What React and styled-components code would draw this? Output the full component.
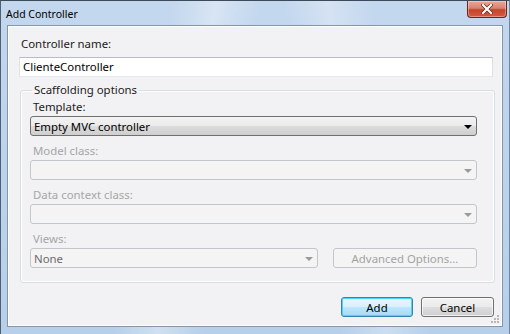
import styled, { createGlobalStyle } from 'styled-components'

const GlobalStyle = createGlobalStyle`
  html, body { margin: 0; padding: 0; }
  body {
    background: #b9d1ea;
    font-family: "Noto Sans", "Open Sans", sans-serif;
    font-size: 11.4px;
  }
`

const Window = styled.div`
  width: 510px;
  height: 334px;
  box-sizing: border-box;
  border-top: 1px solid #3d4a5a;
  border-left: 1px solid #4f6075;
  border-right: 1px solid #6f86a3;
  background:
    linear-gradient(100deg, transparent 30%, rgba(255,255,255,0.35) 38%, transparent 46%),
    linear-gradient(80deg, transparent 60%, rgba(255,255,255,0.3) 68%, transparent 76%),
    linear-gradient(180deg, #c3d7ee 0%, #b7cfe9 100%);
  display: flex;
  flex-direction: column;
`

const TitleBar = styled.div`
  height: 24px;
  display: flex;
  align-items: flex-start;
  justify-content: space-between;
`

const Title = styled.span`
  margin: 6px 0 0 5px;
  font-size: 10.5px;
  color: #000;
`

const CloseButton = styled.div`
  width: 40px;
  height: 17px;
  margin-right: 2px;
  box-sizing: border-box;
  border: 1px solid #6e2318;
  border-top: none;
  border-radius: 0 0 4px 4px;
  background: linear-gradient(180deg, #e8a898 0%, #d8836f 45%, #c7432c 55%, #d25a3f 100%);
  box-shadow: inset 0 0 0 1px rgba(255,255,255,0.35);
  display: flex;
  align-items: center;
  justify-content: center;
`

const Client = styled.div`
  margin: 0 6px 0 6px;
  border: 1px solid #8295ab;
  box-shadow: inset 0 0 0 1px #ffffff;
  background: #f2f1f4;
  padding: 10px 9px 9px 11px;
  display: flex;
  flex-direction: column;
  position: relative;
`

const Label = styled.div`
  line-height: 16px;
  height: 16px;
  color: ${p => (p.disabled ? '#a3a3a3' : '#1a1a1a')};
  padding-left: ${p => p.indent || 0}px;
`

const TextInput = styled.div`
  margin-top: 5px;
  height: 20px;
  box-sizing: border-box;
  border: 1px solid;
  border-color: #b9bcc2 #dbdfe6 #e3e9ef #e2e3ea;
  background: #ffffff;
  padding: 0 3px;
  line-height: 18px;
  color: #000;
`

const Group = styled.fieldset`
  margin: 6px -1px 0 1px;
  padding: 3px 17px 14px 9px;
  border: 1px solid #d5dfe5;
  border-radius: 3px;
  box-shadow: inset 0 0 0 1px #ffffff;
  display: flex;
  flex-direction: column;
`

const Legend = styled.legend`
  padding: 0 2px;
  margin-left: 2px;
  line-height: 14px;
  color: #1a1a1a;
`

const Field = styled.div`
  display: flex;
  flex-direction: column;
  gap: 2px;
  & + & { margin-top: 8px; }
`

const FieldLabel = styled.div`
  line-height: 14px;
  height: 14px;
  padding-left: 3px;
  color: ${p => (p.disabled ? '#a6a6a6' : '#1a1a1a')};
`

const Select = styled.div`
  height: 20px;
  box-sizing: border-box;
  border: 1px solid ${p => (p.disabled ? '#c3c6ca' : '#707070')};
  border-radius: 3px;
  background: ${p =>
    p.disabled
      ? '#f4f4f5'
      : 'linear-gradient(180deg, #f3f3f3 0%, #ebebeb 48%, #dcdcdc 52%, #cfcfcf 100%)'};
  display: flex;
  align-items: center;
  justify-content: space-between;
  padding: 0 4px 0 3px;
  color: ${p => (p.muted ? '#6b6b6b' : '#000')};
  width: ${p => p.width || 'auto'};
`

const Arrow = styled.span`
  width: 0;
  height: 0;
  border-left: 4px solid transparent;
  border-right: 4px solid transparent;
  border-top: 4px solid ${p => (p.disabled ? '#9a9a9a' : '#000')};
  margin-top: 1px;
`

const Row = styled.div`
  display: flex;
  gap: 15px;
`

const Button = styled.div`
  height: 20px;
  box-sizing: border-box;
  width: ${p => p.width}px;
  border-radius: 3px;
  display: flex;
  align-items: center;
  justify-content: center;
  color: #000;
  border: 1px solid #707070;
  background: linear-gradient(180deg, #f2f2f2 0%, #ebebeb 48%, #dddddd 52%, #cfcfcf 100%);
  box-shadow: inset 0 0 0 1px rgba(255,255,255,0.7);

  ${p => p.disabled && `
    color: #a3a3a3;
    border-color: #c3c6ca;
    background: #f4f4f5;
    box-shadow: none;
  `}

  ${p => p.primary && `
    border-color: #3c7fb1;
    background: linear-gradient(180deg, #eaf6fd 0%, #d9f0fc 48%, #bee6fd 52%, #a7d9f5 100%);
    box-shadow: inset 0 0 0 1px #48d5ff;
  `}
`

const Footer = styled.div`
  display: flex;
  justify-content: flex-end;
  gap: 8px;
  margin-top: 14px;
  margin-right: -1px;
`

const Grip = styled.svg`
  position: absolute;
  right: 2px;
  bottom: 2px;
`

export default function App() {
  return (
    <>
      <GlobalStyle />
      <Window>
        <TitleBar>
          <Title>Add Controller</Title>
          <CloseButton>
            <svg width="12" height="10" viewBox="0 0 12 10">
              <path d="M2 1 L10 9 M10 1 L2 9" stroke="#5a1a12" strokeWidth="3.4" strokeLinecap="square" />
              <path d="M2 1 L10 9 M10 1 L2 9" stroke="#ffffff" strokeWidth="2.2" strokeLinecap="square" />
            </svg>
          </CloseButton>
        </TitleBar>
        <Client>
          <Label indent={2}>Controller name:</Label>
          <TextInput>ClienteController</TextInput>
          <Group>
            <Legend>Scaffolding options</Legend>
            <Field>
              <FieldLabel>Template:</FieldLabel>
              <Select>
                Empty MVC controller
                <Arrow />
              </Select>
            </Field>
            <Field>
              <FieldLabel disabled>Model class:</FieldLabel>
              <Select disabled>
                <span />
                <Arrow disabled />
              </Select>
            </Field>
            <Field>
              <FieldLabel disabled>Data context class:</FieldLabel>
              <Select disabled>
                <span />
                <Arrow disabled />
              </Select>
            </Field>
            <Field>
              <FieldLabel disabled>Views:</FieldLabel>
              <Row>
                <Select disabled muted width="288px">
                  None
                  <Arrow disabled />
                </Select>
                <Button disabled width={144}>Advanced Options...</Button>
              </Row>
            </Field>
          </Group>
          <Footer>
            <Button primary width={72}>Add</Button>
            <Button width={73}>Cancel</Button>
          </Footer>
          <Grip width="10" height="10" viewBox="0 0 10 10">
            {[[8, 2], [8, 5], [8, 8], [5, 5], [5, 8], [2, 8]].map(([x, y]) => (
              <rect key={`${x}-${y}`} x={x - 1} y={y - 1} width="2" height="2" fill="#b5b8bc" />
            ))}
          </Grip>
        </Client>
      </Window>
    </>
  )
}
